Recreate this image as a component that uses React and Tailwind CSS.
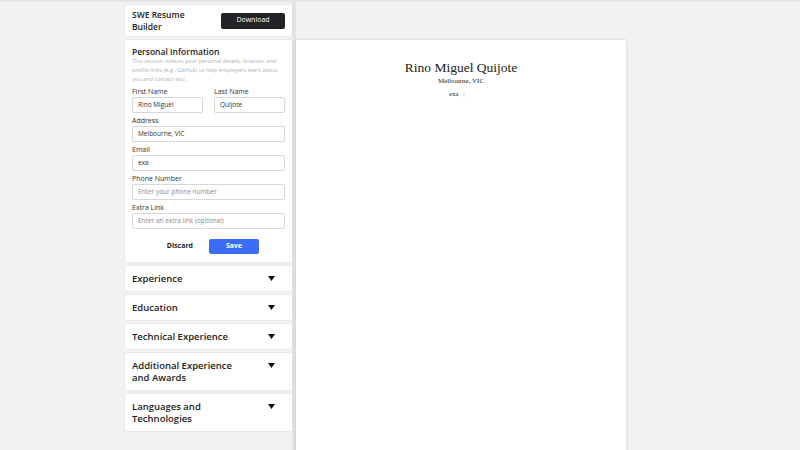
import React from 'react';

const fields = [
  { label: 'Address', value: 'Melbourne, VIC' },
  { label: 'Email', value: 'exa' },
  { label: 'Phone Number', placeholder: 'Enter your phone number' },
  { label: 'Extra Link', placeholder: 'Enter an extra link (optional)' },
];

const sections = [
  ['Experience'],
  ['Education'],
  ['Technical Experience'],
  ['Additional Experience', 'and Awards'],
  ['Languages and', 'Technologies'],
];

function Field({ label, value, placeholder }) {
  return (
    <div className="flex flex-col">
      <label className="text-[7px] leading-[9px] text-[#333] mb-[1px]">{label}</label>
      <div className="h-[16px] border border-[#d8d8d8] rounded-[2px] bg-white px-[5px] flex items-center text-[6.5px]">
        {value ? <span className="text-[#333]">{value}</span> : <span className="text-[#888]">{placeholder}</span>}
      </div>
    </div>
  );
}

export default function App() {
  return (
    <div className="w-[800px] h-[450px] overflow-hidden bg-[#f2f1f3] border-t-2 border-[#e6e6e8] flex pl-[125px] font-['Open_Sans',sans-serif]">
      {/* Sidebar */}
      <div className="w-[171px] flex flex-col gap-[4px] pt-[3px] border-r-4 border-[#e4e4e6]">
        <div className="w-[167px] h-[31px] bg-white rounded-[2px] shadow-[0_0_2px_rgba(0,0,0,0.12)] flex items-center justify-between pl-[7px] pr-[7px]">
          <div className="text-[8.5px] leading-[11.5px] font-semibold text-[#222]">
            SWE Resume<br />Builder
          </div>
          <button className="w-[64px] h-[16px] bg-[#222327] rounded-[2px] text-white text-[7px]">Download</button>
        </div>

        <div className="w-[167px] h-[222px] bg-white rounded-[2px] shadow-[0_0_2px_rgba(0,0,0,0.12)] px-[7px] pt-[7px]">
          <h2 className="text-[8.5px] leading-[10px] font-semibold text-[#222]">Personal Information</h2>
          <p className="text-[5.6px] leading-[9px] text-[#b0b0b0]">
            This section collects your personal details, location, and profile links (e.g., GitHub) to help employers learn about you and contact you.
          </p>
          <div className="flex gap-[11px] mt-[3px]">
            <div className="flex-1"><Field label="First Name" value="Rino Miguel" /></div>
            <div className="flex-1"><Field label="Last Name" value="Quijote" /></div>
          </div>
          <div className="flex flex-col gap-[3px] mt-[3px]">
            {fields.map((f) => (
              <Field key={f.label} {...f} />
            ))}
          </div>
          <div className="flex items-center justify-end gap-[16px] mt-[10px] pr-[26px]">
            <button className="text-[7px] font-bold text-[#222]">Discard</button>
            <button className="w-[50px] h-[15px] bg-[#3c6cf7] rounded-[2px] text-white text-[7px] font-bold">Save</button>
          </div>
        </div>

        {sections.map((lines) => (
          <div
            key={lines[0]}
            className="w-[167px] bg-white rounded-[2px] shadow-[0_0_2px_rgba(0,0,0,0.12)] flex justify-between pl-[7px] pr-[17px] py-[6.5px]"
          >
            <div className="text-[9.5px] leading-[12px] font-semibold text-[#222]">
              {lines.map((l) => (
                <div key={l}>{l}</div>
              ))}
            </div>
            <svg width="7" height="6" viewBox="0 0 7 6" className="mt-[3px]">
              <polygon points="0,0 7,0 3.5,5" fill="#111" />
            </svg>
          </div>
        ))}
      </div>

      {/* Resume paper */}
      <div className="pt-[38px]">
        <div className="w-[330px] h-[420px] bg-white shadow-[0_0_3px_rgba(0,0,0,0.15)] font-['Liberation_Serif',serif] text-[#222] flex flex-col items-center pt-[19px]">
          <div className="text-[13.5px] leading-[17px]">Rino Miguel Quijote</div>
          <div className="text-[7px] leading-[10px]">Melbourne, VIC</div>
          <div className="text-[6.5px] leading-[10px] mt-[3px] flex items-center gap-[5px] pr-[8px]">
            <span>exa</span>
            <span className="text-[#999]">|</span>
          </div>
        </div>
      </div>
    </div>
  );
}
